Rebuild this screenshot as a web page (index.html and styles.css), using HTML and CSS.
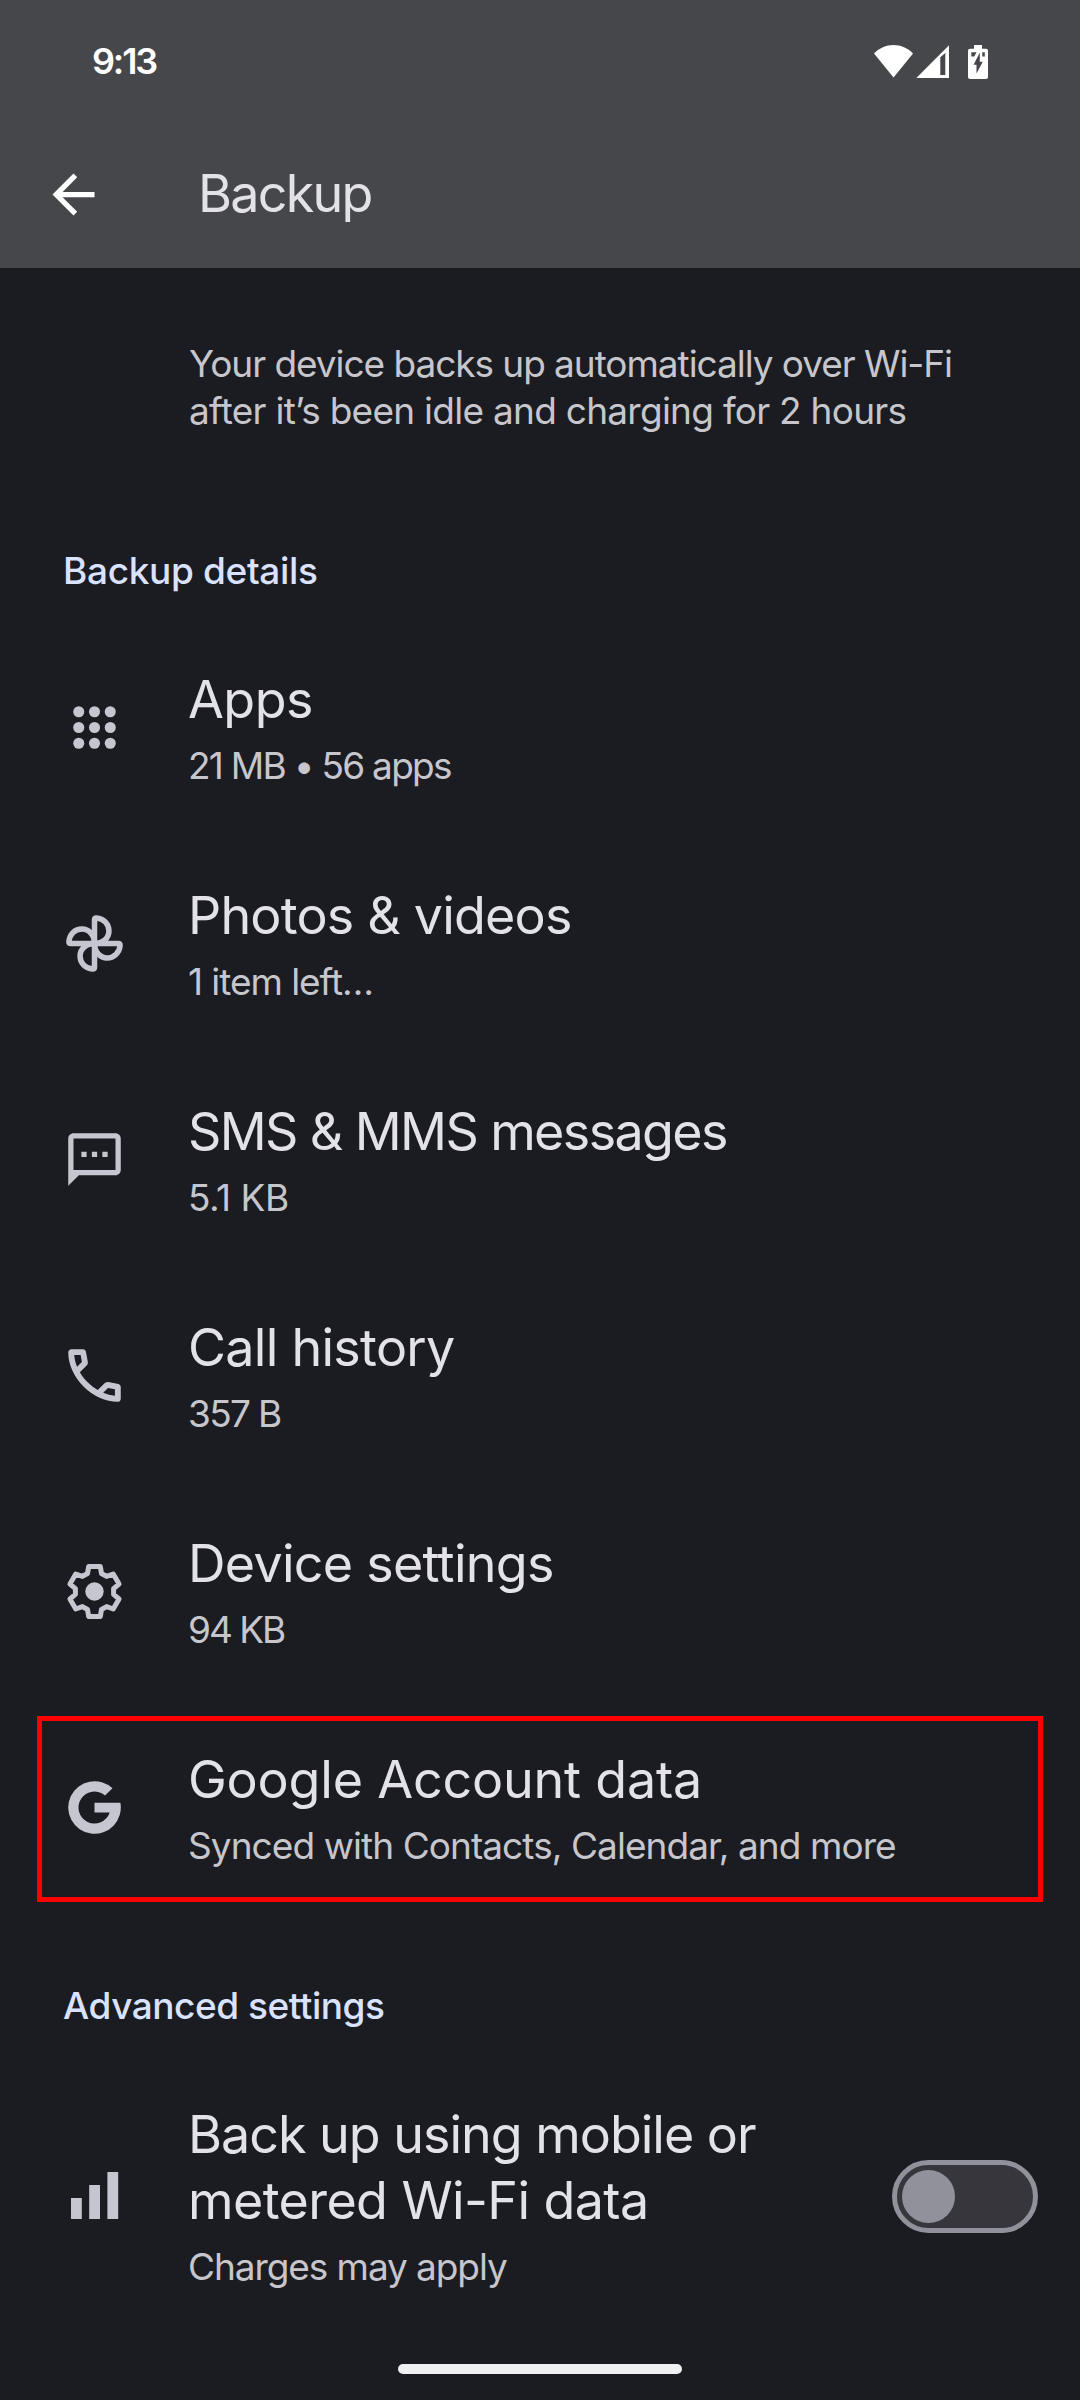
FILE: index.html
```html
<!DOCTYPE html>
<html lang="en">
<head>
<meta charset="utf-8">
<title>Backup</title>
<link rel="stylesheet" href="styles.css">
</head>
<body>
<header class="header">
  <div class="status-bar">
    <span class="time">9:13</span>
    <svg class="status-icons" width="114" height="34" viewBox="0 0 114 34">
      <g fill="#fff">
        <path d="M0 8.500C5.400 3 12 0 19.500 0S33.600 3 39 8.500L19.500 32.500Z"/>
        <path fill-rule="evenodd" d="M42.300 33L75 .3V33ZM66.300 12.200V30h5V8Z"/>
        <path d="M100 0h8v3.700h4a2 2 0 0 1 2 2V32a2 2 0 0 1-2 2H96a2 2 0 0 1-2-2V5.700a2 2 0 0 1 2-2h4Z"/>
      </g>
      <g fill="#46474b">
        <path d="M97.300 7.300h5.200l-2.200 4.300h-3ZM108.300 7.300h2.500v4.300h-2.500Z"/>
        <path d="M105.800 7.500v9.300h3L102.500 28.500v-8.800H99.600Z"/>
      </g>
    </svg>
  </div>
  <div class="toolbar">
    <svg class="back" width="63" height="63" viewBox="0 0 24 24"><path fill="#fff" d="M20 11H7.830l5.590-5.590L12 4l-8 8 8 8 1.410-1.410L7.830 13H20v-2z"/></svg>
    <h1 class="title">Backup</h1>
  </div>
</header>
<main class="content">
  <p class="intro"><span class="intro-first">Your device backs up automatically over Wi-Fi</span><br><span class="intro-second">after it’s been idle and charging for 2 hours</span></p>

  <h2 class="section">Backup details</h2>
  <div class="row apps">
    <svg class="icon" viewBox="0 0 24 24"><g fill="#c6c6d0"><circle cx="6" cy="6" r="2.100"/><circle cx="12" cy="6" r="2.100"/><circle cx="18" cy="6" r="2.100"/><circle cx="6" cy="12" r="2.100"/><circle cx="12" cy="12" r="2.100"/><circle cx="18" cy="12" r="2.100"/><circle cx="6" cy="18" r="2.100"/><circle cx="12" cy="18" r="2.100"/><circle cx="18" cy="18" r="2.100"/></g></svg>
    <div class="text"><div class="name">Apps</div><div class="detail">21 MB • 56 apps</div></div>
  </div>
  <div class="row photos">
    <svg class="icon" viewBox="0 0 24 24"><g fill="none" stroke="#c6c6d0" stroke-width="2.100" stroke-linejoin="round"><path id="blade" d="M12 12V2.900Q12 2.200 12.700 2.250C15.600 2.500 17.500 4.600 17.500 7.200C17.500 9.900 15.200 12 12 12"/><use href="#blade" transform="rotate(90 12 12)"/><use href="#blade" transform="rotate(180 12 12)"/><use href="#blade" transform="rotate(270 12 12)"/></g></svg>
    <div class="text"><div class="name">Photos &amp; videos</div><div class="detail">1 item left…</div></div>
  </div>
  <div class="row messages">
    <svg class="icon" viewBox="0 0 24 24"><path fill="#c6c6d0" fill-rule="evenodd" d="M20 2H4c-1.100 0-2 .9-2 2v18l4-4h14c1.100 0 2-.9 2-2V4c0-1.100-.9-2-2-2zM4 4h16v12H4zM7 9h2v2H7zM11 9h2v2h-2zM15 9h2v2h-2z"/></svg>
    <div class="text"><div class="name">SMS &amp; MMS messages</div><div class="detail">5.1 KB</div></div>
  </div>
  <div class="row calls">
    <svg class="icon" viewBox="48 -912 864 864"><path fill="#c6c6d0" d="M798-120q-125 0-247-54.500T329-329Q229-429 174.500-551T120-798q0-18 12-30t30-12h162q14 0 25 9.500t13 22.500l26 140q2 16-1 27t-11 19l-97 98q20 37 47.500 71.500T387-386q31 31 65 57.500t72 48.500l94-94q9-9 23.500-13.500T670-390l138 28q14 4 23 14.500t9 23.500v162q0 18-12 30t-30 12ZM241-600l66-66-17-94h-89q5 41 14 81t26 79Zm358 358q39 17 79.500 27t81.500 13v-88l-94-19-67 67Z"/></svg>
    <div class="text"><div class="name">Call history</div><div class="detail">357 B</div></div>
  </div>
  <div class="row device">
    <svg class="icon" viewBox="-31.500 -31.500 63 63"><path fill="none" stroke="#c6c6d0" stroke-width="5" stroke-linejoin="round" d="M-7-18L-5.800-25H5.800L7-18L12.100-15.100L18.750-17.500L24.550-7.500L19.100-2.900V2.900L24.550 7.500L18.750 17.500L12.100 15.100L7 18L5.800 25H-5.800L-7 18L-12.100 15.100L-18.750 17.500L-24.550 7.500L-19.100 2.900V-2.900L-24.550-7.500L-18.750-17.500L-12.100-15.100Z"/><circle r="9.200" fill="#c6c6d0"/></svg>
    <div class="text"><div class="name">Device settings</div><div class="detail">94 KB</div></div>
  </div>
  <div class="row account highlighted">
    <svg class="icon" viewBox="-31.500 -31.500 63 63"><path fill="#c6c6d0" d="M18-19.200A26.300 26.300 0 1 0 25.900-4.700H0V5H15.200A16 16 0 1 1 10.500-12Z"/></svg>
    <div class="text"><div class="name">Google Account data</div><div class="detail">Synced with Contacts, Calendar, and more</div></div>
  </div>

  <h2 class="section advanced">Advanced settings</h2>
  <div class="row metered">
    <svg class="icon" viewBox="0 0 63 63"><path fill="#c6c6d0" d="M8 34h10.800v21H8zM26.200 21H37v34H26.200zM44.400 8h10.800v47H44.400z"/></svg>
    <div class="text"><div class="name">Back up using mobile or<br><span class="name-second">metered Wi-Fi data</span></div><div class="detail">Charges may apply</div></div>
    <div class="switch"><div class="knob"></div></div>
  </div>
</main>
<footer class="nav"><div class="pill"></div></footer>
</body>
</html>
```
FILE: styles.css
```css
*, *::after { box-sizing: border-box; margin: 0; padding: 0; }

body {
  width: 1080px;
  height: 2400px;
  display: flex;
  flex-direction: column;
  overflow: hidden;
  background: #1b1c21;
  color: #e4e2e9;
  font-family: Inter, "Liberation Sans", sans-serif;
}

svg { display: block; flex: none; }

.header { height: 268px; background: #46474b; }

.status-bar {
  height: 122px;
  padding: 0 92px;
  display: flex;
  justify-content: space-between;
  align-items: center;
}
.time { color: #fff; font-size: 36px; font-weight: 600; letter-spacing: -2.18px; }
.status-icons { margin-top: 2px; }

.toolbar {
  height: 146px;
  padding-left: 42px;
  display: flex;
  align-items: center;
  gap: 93px;
}
.back { margin-bottom: 2px; }
.title { font-size: 52px; font-weight: 400; line-height: 60px; letter-spacing: -1.74px; margin-bottom: 2px; }

.intro {
  padding: 72px 0 47px 189px;
  font-size: 37px;
  line-height: 47px;
  color: #c6c6cc;
}
.intro-first { letter-spacing: -1.05px; }
.intro-second { letter-spacing: -.73px; }

.section {
  padding: 66px 0 25px 63px;
  font-size: 37px;
  line-height: 48px;
  font-weight: 500;
  letter-spacing: -.34px;
  color: #d9e2ff;
}
.advanced { letter-spacing: -.47px; }

.row {
  position: relative;
  padding: 47px 42px 45px 63px;
  display: flex;
  align-items: center;
}
.icon { width: 63px; height: 63px; margin: 0 62px 3px 0; }
.text { flex: 1; }
.name { font-size: 52px; line-height: 66px; }
.detail { margin-top: 8px; font-size: 37px; line-height: 50px; color: #c6c6cc; }

.apps .name { letter-spacing: -.52px; }
.apps .detail { letter-spacing: -1.73px; }
.photos .name { letter-spacing: -.8px; }
.photos .detail { letter-spacing: -1.06px; }
.messages .name { letter-spacing: -1.62px; }
.messages .detail { letter-spacing: -.46px; }
.calls .name { letter-spacing: -.71px; }
.calls .detail { letter-spacing: -1.67px; }
.device .name { letter-spacing: -.72px; }
.device .detail { letter-spacing: -2.03px; }
.account .name { letter-spacing: -.19px; }
.account .detail { letter-spacing: -.93px; }
.metered .name { letter-spacing: -1.01px; }
.metered .name-second { letter-spacing: -.6px; }
.metered .detail { letter-spacing: -1.08px; }

.highlighted::after {
  content: "";
  position: absolute;
  left: 37px;
  top: 16px;
  width: 1006px;
  height: 186px;
  border: 5px solid #f00;
}

.switch {
  width: 146px;
  height: 73px;
  margin-bottom: 1px;
  padding: 0 5px;
  display: flex;
  align-items: center;
  border: 5px solid #90919a;
  border-radius: 37px;
  background: #36363c;
}
.knob { width: 53px; height: 53px; border-radius: 50%; background: #90919a; }

.nav { margin-top: auto; height: 36px; display: flex; justify-content: center; }
.pill { width: 284px; height: 10px; border-radius: 5px; background: #f0f0f2; }
```
